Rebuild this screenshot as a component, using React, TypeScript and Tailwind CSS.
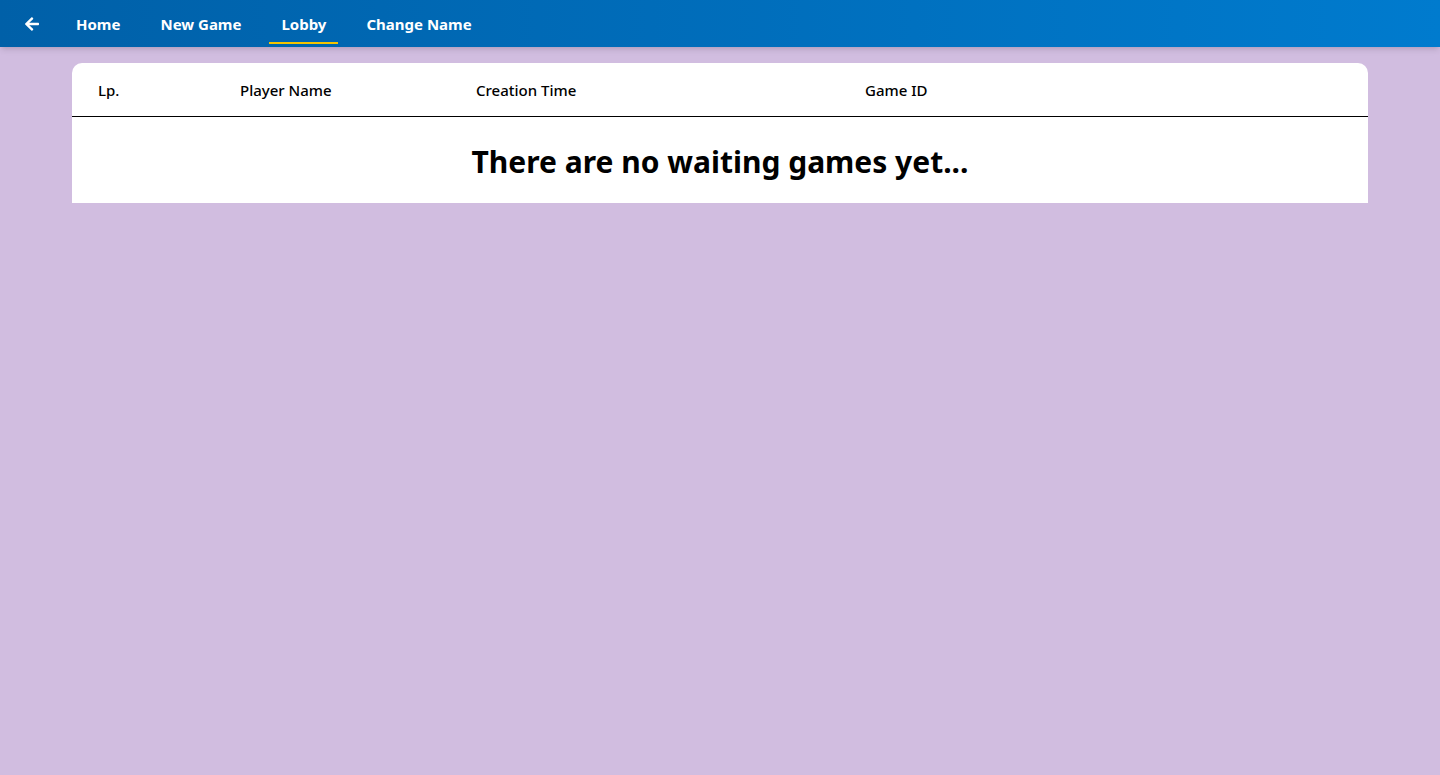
import { FaArrowLeft } from "react-icons/fa";

const links = ["Home", "New Game", "Lobby", "Change Name"];

const App = () => {
  return (
    <div className="min-h-[775px] w-full bg-[#d1bde0] font-['Noto_Sans',sans-serif]">
      <nav className="flex h-[47px] items-center bg-gradient-to-r from-[#0060a8] to-[#007bce] pl-[24px] shadow-md">
        <FaArrowLeft className="mr-[24px] h-[16px] w-[16px] text-white" />
        <div className="flex items-center gap-[16px]">
          {links.map((l) => (
            <a
              key={l}
              className={
                "relative flex h-[47px] items-center px-[12px] pt-[2px] text-[15px] font-bold text-white " +
                (l === "Lobby" ? "after:absolute after:bottom-[3px] after:left-0 after:right-0 after:h-[2px] after:bg-[#f5c400]" : "")
              }
            >
              {l}
            </a>
          ))}
        </div>
      </nav>
      <main className="px-[72px] pt-[16px]">
        <div className="overflow-hidden rounded-t-[10px] bg-white">
          <div className="grid h-[54px] grid-cols-[142px_236px_389px_1fr] items-center border-b border-black pl-[26px] pt-[1px] text-[15px] font-medium text-black">
            <span>Lp.</span>
            <span>Player Name</span>
            <span>Creation Time</span>
            <span>Game ID</span>
          </div>
          <div className="flex h-[86px] items-center justify-center pt-[2px]">
            <h2 className="text-[30px] font-bold text-black">There are no waiting games yet...</h2>
          </div>
        </div>
      </main>
    </div>
  );
};

export default App;
